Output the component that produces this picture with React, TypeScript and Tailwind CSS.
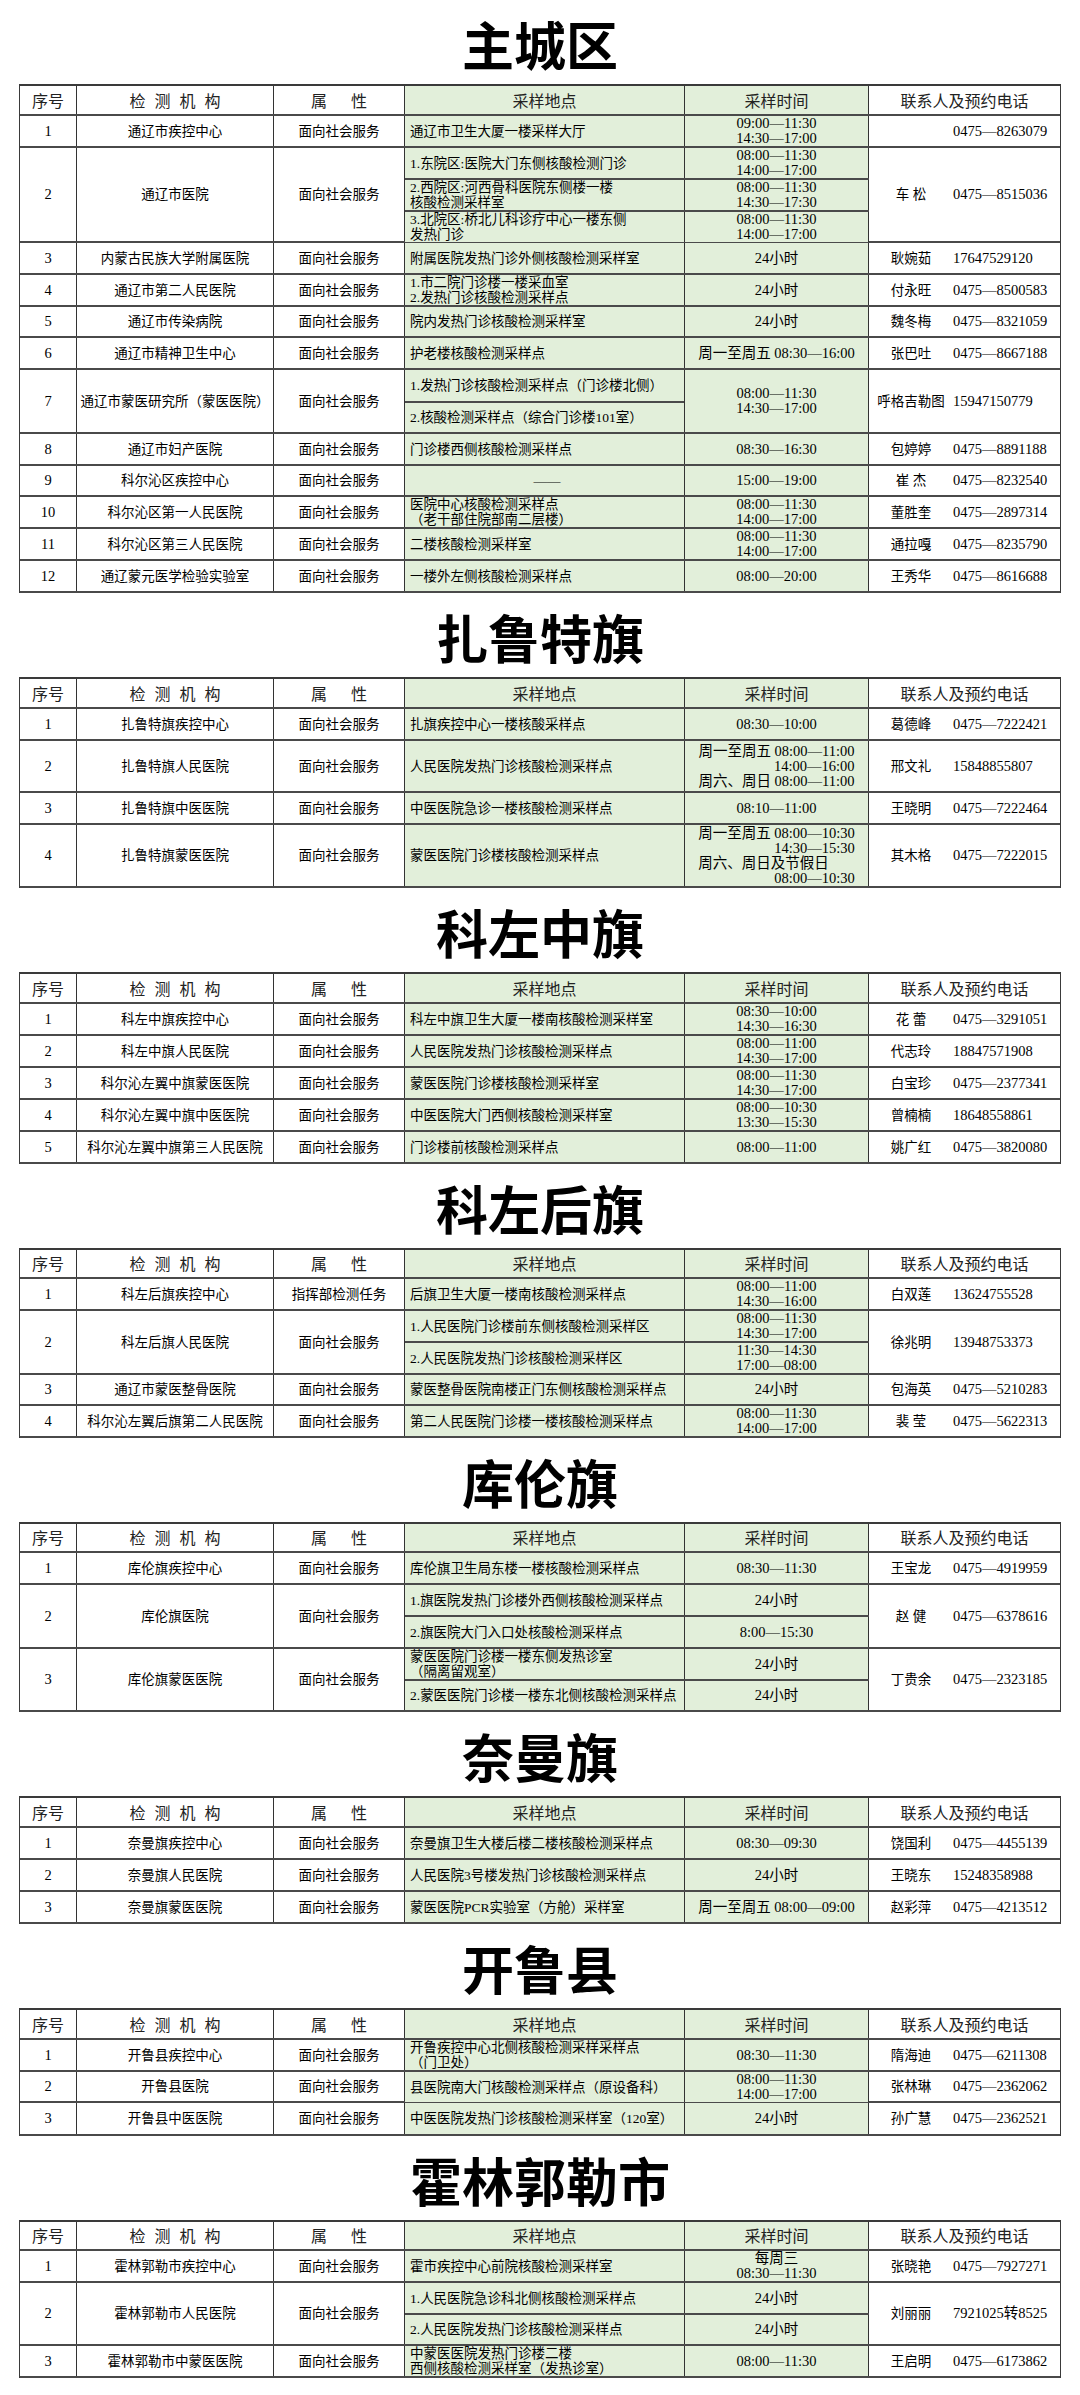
import React from 'react';

type Line = string | { text: string; right: true };

interface Sub {
  h: number;
  place: string[];
  time?: Line[];
  mid?: boolean;
}

interface Row {
  no: number;
  org: string;
  attr?: string;
  subs: Sub[];
  time?: Line[]; // spans every sub row
  name?: string;
  phone: string;
}

interface Section {
  title: string;
  head: number;
  rows: Row[];
}

const R = (text: string): Line => ({ text, right: true });

const SECTIONS: Section[] = [
  {
    title: '主城区',
    head: 30,
    rows: [
      { no: 1, org: '通辽市疾控中心', subs: [{ h: 32, place: ['通辽市卫生大厦一楼采样大厅'], time: ['09:00—11:30', '14:30—17:00'] }], phone: '0475—8263079' },
      {
        no: 2,
        org: '通辽市医院',
        subs: [
          { h: 32, place: ['1.东院区:医院大门东侧核酸检测门诊'], time: ['08:00—11:30', '14:00—17:00'] },
          { h: 32, place: ['2.西院区:河西骨科医院东侧楼一楼', '核酸检测采样室'], time: ['08:00—11:30', '14:30—17:30'] },
          { h: 31, place: ['3.北院区:桥北儿科诊疗中心一楼东侧', '发热门诊'], time: ['08:00—11:30', '14:00—17:00'] },
        ],
        name: '车 松',
        phone: '0475—8515036',
      },
      { no: 3, org: '内蒙古民族大学附属医院', subs: [{ h: 32, place: ['附属医院发热门诊外侧核酸检测采样室'], time: ['24小时'] }], name: '耿婉茹', phone: '17647529120' },
      { no: 4, org: '通辽市第二人民医院', subs: [{ h: 32, place: ['1.市二院门诊楼一楼采血室', '2.发热门诊核酸检测采样点'], time: ['24小时'] }], name: '付永旺', phone: '0475—8500583' },
      { no: 5, org: '通辽市传染病院', subs: [{ h: 31, place: ['院内发热门诊核酸检测采样室'], time: ['24小时'] }], name: '魏冬梅', phone: '0475—8321059' },
      { no: 6, org: '通辽市精神卫生中心', subs: [{ h: 32, place: ['护老楼核酸检测采样点'], time: ['周一至周五 08:30—16:00'] }], name: '张巴吐', phone: '0475—8667188' },
      {
        no: 7,
        org: '通辽市蒙医研究所（蒙医医院）',
        subs: [
          { h: 33, place: ['1.发热门诊核酸检测采样点（门诊楼北侧）'] },
          { h: 31, place: ['2.核酸检测采样点（综合门诊楼101室）'] },
        ],
        time: ['08:00—11:30', '14:30—17:00'],
        name: '呼格吉勒图',
        phone: '15947150779',
      },
      { no: 8, org: '通辽市妇产医院', subs: [{ h: 32, place: ['门诊楼西侧核酸检测采样点'], time: ['08:30—16:30'] }], name: '包婷婷', phone: '0475—8891188' },
      { no: 9, org: '科尔沁区疾控中心', subs: [{ h: 31, place: ['——'], mid: true, time: ['15:00—19:00'] }], name: '崔 杰', phone: '0475—8232540' },
      { no: 10, org: '科尔沁区第一人民医院', subs: [{ h: 32, place: ['医院中心核酸检测采样点', '（老干部住院部南二层楼）'], time: ['08:00—11:30', '14:00—17:00'] }], name: '董胜奎', phone: '0475—2897314' },
      { no: 11, org: '科尔沁区第三人民医院', subs: [{ h: 32, place: ['二楼核酸检测采样室'], time: ['08:00—11:30', '14:00—17:00'] }], name: '通拉嘎', phone: '0475—8235790' },
      { no: 12, org: '通辽蒙元医学检验实验室', subs: [{ h: 32, place: ['一楼外左侧核酸检测采样点'], time: ['08:00—20:00'] }], name: '王秀华', phone: '0475—8616688' },
    ],
  },
  {
    title: '扎鲁特旗',
    head: 30,
    rows: [
      { no: 1, org: '扎鲁特旗疾控中心', subs: [{ h: 32, place: ['扎旗疾控中心一楼核酸采样点'], time: ['08:30—10:00'] }], name: '葛德峰', phone: '0475—7222421' },
      { no: 2, org: '扎鲁特旗人民医院', subs: [{ h: 52, place: ['人民医院发热门诊核酸检测采样点'], time: ['周一至周五 08:00—11:00', R('14:00—16:00'), '周六、周日 08:00—11:00'] }], name: '邢文礼', phone: '15848855807' },
      { no: 3, org: '扎鲁特旗中医医院', subs: [{ h: 32, place: ['中医医院急诊一楼核酸检测采样点'], time: ['08:10—11:00'] }], name: '王晓明', phone: '0475—7222464' },
      { no: 4, org: '扎鲁特旗蒙医医院', subs: [{ h: 63, place: ['蒙医医院门诊楼核酸检测采样点'], time: ['周一至周五 08:00—10:30', R('14:30—15:30'), '周六、周日及节假日', R('08:00—10:30')] }], name: '其木格', phone: '0475—7222015' },
    ],
  },
  {
    title: '科左中旗',
    head: 30,
    rows: [
      { no: 1, org: '科左中旗疾控中心', subs: [{ h: 32, place: ['科左中旗卫生大厦一楼南核酸检测采样室'], time: ['08:30—10:00', '14:30—16:30'] }], name: '花 蕾', phone: '0475—3291051' },
      { no: 2, org: '科左中旗人民医院', subs: [{ h: 32, place: ['人民医院发热门诊核酸检测采样点'], time: ['08:00—11:00', '14:30—17:00'] }], name: '代志玲', phone: '18847571908' },
      { no: 3, org: '科尔沁左翼中旗蒙医医院', subs: [{ h: 32, place: ['蒙医医院门诊楼核酸检测采样室'], time: ['08:00—11:30', '14:30—17:00'] }], name: '白宝珍', phone: '0475—2377341' },
      { no: 4, org: '科尔沁左翼中旗中医医院', subs: [{ h: 32, place: ['中医医院大门西侧核酸检测采样室'], time: ['08:00—10:30', '13:30—15:30'] }], name: '曾楠楠', phone: '18648558861' },
      { no: 5, org: '科尔沁左翼中旗第三人民医院', subs: [{ h: 32, place: ['门诊楼前核酸检测采样点'], time: ['08:00—11:00'] }], name: '姚广红', phone: '0475—3820080' },
    ],
  },
  {
    title: '科左后旗',
    head: 29,
    rows: [
      { no: 1, org: '科左后旗疾控中心', attr: '指挥部检测任务', subs: [{ h: 32, place: ['后旗卫生大厦一楼南核酸检测采样点'], time: ['08:00—11:00', '14:30—16:00'] }], name: '白双莲', phone: '13624755528' },
      {
        no: 2,
        org: '科左后旗人民医院',
        subs: [
          { h: 32, place: ['1.人民医院门诊楼前东侧核酸检测采样区'], time: ['08:00—11:30', '14:30—17:00'] },
          { h: 32, place: ['2.人民医院发热门诊核酸检测采样区'], time: ['11:30—14:30', '17:00—08:00'] },
        ],
        name: '徐兆明',
        phone: '13948753373',
      },
      { no: 3, org: '通辽市蒙医整骨医院', subs: [{ h: 31, place: ['蒙医整骨医院南楼正门东侧核酸检测采样点'], time: ['24小时'] }], name: '包海英', phone: '0475—5210283' },
      { no: 4, org: '科尔沁左翼后旗第二人民医院', subs: [{ h: 32, place: ['第二人民医院门诊楼一楼核酸检测采样点'], time: ['08:00—11:30', '14:00—17:00'] }], name: '裴 莹', phone: '0475—5622313' },
    ],
  },
  {
    title: '库伦旗',
    head: 29,
    rows: [
      { no: 1, org: '库伦旗疾控中心', subs: [{ h: 32, place: ['库伦旗卫生局东楼一楼核酸检测采样点'], time: ['08:30—11:30'] }], name: '王宝龙', phone: '0475—4919959' },
      {
        no: 2,
        org: '库伦旗医院',
        subs: [
          { h: 32, place: ['1.旗医院发热门诊楼外西侧核酸检测采样点'], time: ['24小时'] },
          { h: 32, place: ['2.旗医院大门入口处核酸检测采样点'], time: ['8:00—15:30'] },
        ],
        name: '赵 健',
        phone: '0475—6378616',
      },
      {
        no: 3,
        org: '库伦旗蒙医医院',
        subs: [
          { h: 32, place: ['蒙医医院门诊楼一楼东侧发热诊室', '（隔离留观室）'], time: ['24小时'] },
          { h: 31, place: ['2.蒙医医院门诊楼一楼东北侧核酸检测采样点'], time: ['24小时'] },
        ],
        name: '丁贵余',
        phone: '0475—2323185',
      },
    ],
  },
  {
    title: '奈曼旗',
    head: 30,
    rows: [
      { no: 1, org: '奈曼旗疾控中心', subs: [{ h: 32, place: ['奈曼旗卫生大楼后楼二楼核酸检测采样点'], time: ['08:30—09:30'] }], name: '饶国利', phone: '0475—4455139' },
      { no: 2, org: '奈曼旗人民医院', subs: [{ h: 32, place: ['人民医院3号楼发热门诊核酸检测采样点'], time: ['24小时'] }], name: '王晓东', phone: '15248358988' },
      { no: 3, org: '奈曼旗蒙医医院', subs: [{ h: 32, place: ['蒙医医院PCR实验室（方舱）采样室'], time: ['周一至周五 08:00—09:00'] }], name: '赵彩萍', phone: '0475—4213512' },
    ],
  },
  {
    title: '开鲁县',
    head: 30,
    rows: [
      { no: 1, org: '开鲁县疾控中心', subs: [{ h: 32, place: ['开鲁疾控中心北侧核酸检测采样采样点', '（门卫处）'], time: ['08:30—11:30'] }], name: '隋海迪', phone: '0475—6211308' },
      { no: 2, org: '开鲁县医院', subs: [{ h: 31, place: ['县医院南大门核酸检测采样点（原设备科）'], time: ['08:00—11:30', '14:00—17:00'] }], name: '张林琳', phone: '0475—2362062' },
      { no: 3, org: '开鲁县中医医院', subs: [{ h: 33, place: ['中医医院发热门诊核酸检测采样室（120室）'], time: ['24小时'] }], name: '孙广慧', phone: '0475—2362521' },
    ],
  },
  {
    title: '霍林郭勒市',
    head: 29,
    rows: [
      { no: 1, org: '霍林郭勒市疾控中心', subs: [{ h: 32, place: ['霍市疾控中心前院核酸检测采样室'], time: ['每周三', '08:30—11:30'] }], name: '张晓艳', phone: '0475—7927271' },
      {
        no: 2,
        org: '霍林郭勒市人民医院',
        subs: [
          { h: 32, place: ['1.人民医院急诊科北侧核酸检测采样点'], time: ['24小时'] },
          { h: 31, place: ['2.人民医院发热门诊核酸检测采样点'], time: ['24小时'] },
        ],
        name: '刘丽丽',
        phone: '7921025转8525',
      },
      { no: 3, org: '霍林郭勒市中蒙医医院', subs: [{ h: 32, place: ['中蒙医医院发热门诊楼二楼', '西侧核酸检测采样室（发热诊室）'], time: ['08:00—11:30'] }], name: '王启明', phone: '0475—6173862' },
    ],
  },
];

const vLine = 'border-r border-[#333]';
const hLine = 'border-b-2 border-[#4a4a4a]';
const green = 'bg-[#e2efda]';

const TimeLines = ({ lines }: { lines: Line[] }) => {
  const mixed = lines.some((l) => typeof l !== 'string');
  return (
    <div className={`flex flex-col ${mixed ? 'items-start' : 'items-center'} text-[14.5px] leading-[15px]`}>
      {lines.map((l, i) =>
        typeof l === 'string' ? (
          <span key={i} className="whitespace-nowrap">{l}</span>
        ) : (
          <span key={i} className="self-end whitespace-nowrap">{l.text}</span>
        )
      )}
    </div>
  );
};

const Place = ({ sub }: { sub: Sub }) => (
  <div className={`flex w-full flex-col pl-[5px] ${sub.mid ? 'items-center' : 'items-start'}`}>
    {sub.place.map((p, i) => (
      <span key={i} className="whitespace-nowrap">{p}</span>
    ))}
  </div>
);

const HeaderRow = ({ h }: { h: number }) => (
  <div className={`flex ${hLine} font-['Noto_Sans_CJK_SC',sans-serif] text-[16px] text-[#222]`} style={{ height: h }}>
    <div className={`flex w-[57px] items-center justify-center ${vLine}`}>序号</div>
    <div className={`flex w-[197px] items-center justify-center gap-[9px] ${vLine}`}>
      <span>检</span><span>测</span><span>机</span><span>构</span>
    </div>
    <div className={`flex w-[131px] items-center justify-center gap-[24px] ${vLine}`}>
      <span>属</span><span>性</span>
    </div>
    <div className={`flex w-[280px] items-center justify-center ${green} ${vLine}`}>采样地点</div>
    <div className={`flex w-[184px] items-center justify-center ${green} ${vLine}`}>采样时间</div>
    <div className="flex flex-1 items-center justify-center">联系人及预约电话</div>
  </div>
);

const TableRow = ({ row }: { row: Row }) => {
  const total = row.subs.reduce((a, s) => a + s.h, 0);
  const last = row.subs.length - 1;
  return (
    <div className={`flex ${hLine}`} style={{ height: total }}>
      <div className={`flex w-[57px] items-center justify-center text-[14.5px] ${vLine}`}>{row.no}</div>
      <div className={`flex w-[197px] items-center justify-center whitespace-nowrap ${vLine}`}>{row.org}</div>
      <div className={`flex w-[131px] items-center justify-center whitespace-nowrap ${vLine}`}>{row.attr ?? '面向社会服务'}</div>
      {row.time ? (
        <>
          <div className={`flex w-[280px] flex-col ${green} ${vLine}`}>
            {row.subs.map((s, i) => (
              <div
                key={i}
                className={`flex items-center ${i < last ? hLine : 'flex-1'}`}
                style={i < last ? { height: s.h } : undefined}
              >
                <Place sub={s} />
              </div>
            ))}
          </div>
          <div className={`flex w-[184px] items-center justify-center ${green} ${vLine}`}>
            <TimeLines lines={row.time} />
          </div>
        </>
      ) : (
        <div className="flex w-[464px] flex-col">
          {row.subs.map((s, i) => (
            <div
              key={i}
              className={`flex ${i < last ? hLine : 'flex-1'}`}
              style={i < last ? { height: s.h } : undefined}
            >
              <div className={`flex w-[280px] items-center ${green} ${vLine}`}>
                <Place sub={s} />
              </div>
              <div className={`flex w-[184px] items-center justify-center ${green} ${vLine}`}>
                <TimeLines lines={s.time ?? []} />
              </div>
            </div>
          ))}
        </div>
      )}
      <div className="flex flex-1 items-center">
        <div className="w-[84px] whitespace-pre text-center">{row.name ?? ''}</div>
        <div className="whitespace-nowrap text-[14.5px]">{row.phone}</div>
      </div>
    </div>
  );
};

const SectionBlock = ({ section }: { section: Section }) => (
  <section>
    <div className="flex h-[84px] items-center justify-center pt-[4px]">
      <h1 className="font-['Noto_Sans_CJK_SC',sans-serif] text-[52px] font-bold leading-none text-black">{section.title}</h1>
    </div>
    <div className="mx-auto w-[1042px] border-x border-t-2 border-[#3a3a3a] font-['Liberation_Serif','Noto_Sans_CJK_SC',serif] text-[13.5px] leading-[15px] text-black">
      <HeaderRow h={section.head} />
      {section.rows.map((r) => (
        <TableRow key={r.no} row={r} />
      ))}
    </div>
  </section>
);

export default function App() {
  return (
    <div className="min-h-[2395px] w-[1080px] bg-white">
      {SECTIONS.map((s) => (
        <SectionBlock key={s.title} section={s} />
      ))}
    </div>
  );
}
